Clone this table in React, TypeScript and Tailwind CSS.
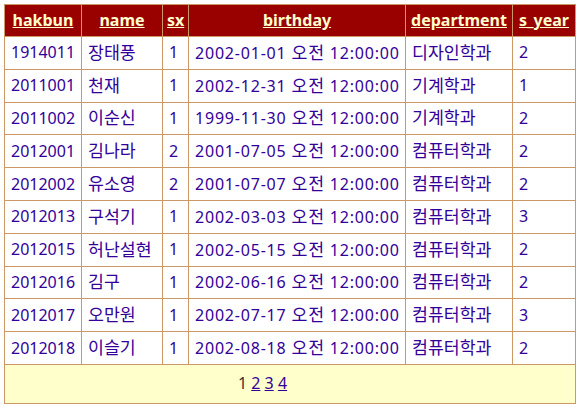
import React from "react";

const rows = [
  ["1914011", "장태풍", "1", "2002-01-01 오전 12:00:00", "디자인학과", "2"],
  ["2011001", "천재", "1", "2002-12-31 오전 12:00:00", "기계학과", "1"],
  ["2011002", "이순신", "1", "1999-11-30 오전 12:00:00", "기계학과", "2"],
  ["2012001", "김나라", "2", "2001-07-05 오전 12:00:00", "컴퓨터학과", "2"],
  ["2012002", "유소영", "2", "2001-07-07 오전 12:00:00", "컴퓨터학과", "2"],
  ["2012013", "구석기", "1", "2002-03-03 오전 12:00:00", "컴퓨터학과", "3"],
  ["2012015", "허난설현", "1", "2002-05-15 오전 12:00:00", "컴퓨터학과", "2"],
  ["2012016", "김구", "1", "2002-06-16 오전 12:00:00", "컴퓨터학과", "2"],
  ["2012017", "오만원", "1", "2002-07-17 오전 12:00:00", "컴퓨터학과", "3"],
  ["2012018", "이슬기", "1", "2002-08-18 오전 12:00:00", "컴퓨터학과", "2"],
];

const headers = ["hakbun", "name", "sx", "birthday", "department", "s_year"];
const widths = ["w-[77px]", "w-[81px]", "w-[26px]", "w-[217px]", "w-[107px]", "w-[63px]"];

function Txt({ s }: { s: string }) {
  const parts = s.split(/([가-힣]+)/);
  return (
    <>
      {parts.map((p, i) =>
        /[가-힣]/.test(p) ? (
          <span key={i} className="text-[17.3px]">
            {p}
          </span>
        ) : (
          <React.Fragment key={i}>{p}</React.Fragment>
        )
      )}
    </>
  );
}

export default function App() {
  return (
    <div
      className="p-[4px] bg-white"
      style={{ fontFamily: '"Noto Sans", "Noto Sans CJK KR", sans-serif' }}
    >
      <table className="border-collapse table-fixed w-[571px] text-[16px] leading-[21px]">
        <colgroup>
          {widths.map((w, i) => (
            <col key={i} className={w} />
          ))}
        </colgroup>
        <thead>
          <tr className="h-[32px] bg-[#990000]">
            {headers.map((h) => (
              <th
                key={h}
                className="border border-[#cc9966] px-[4px] text-center font-bold text-[#ffffcc] underline"
              >
                {h}
              </th>
            ))}
          </tr>
        </thead>
        <tbody>
          {rows.map((r) => (
            <tr key={r[0]} className="h-[32.8px]">
              {r.map((c, i) => (
                <td
                  key={i}
                  className={
                    i === 3
                      ? "border border-[#cc9966] px-[6px] text-left text-[#330099] whitespace-nowrap tracking-[0.8px]"
                      : "border border-[#cc9966] px-[6px] text-left text-[#330099] whitespace-nowrap"
                  }
                >
                  <Txt s={c} />
                </td>
              ))}
            </tr>
          ))}
          <tr className="h-[39px] bg-[#ffffcc]">
            <td
              colSpan={6}
              className="border border-[#cc9966] text-center text-[#330099] pr-[55px]"
            >
              <span className="text-[#333333]">1</span>{" "}
              <a href="#" className="underline">2</a>{" "}
              <a href="#" className="underline">3</a>{" "}
              <a href="#" className="underline">4</a>
            </td>
          </tr>
        </tbody>
      </table>
    </div>
  );
}
